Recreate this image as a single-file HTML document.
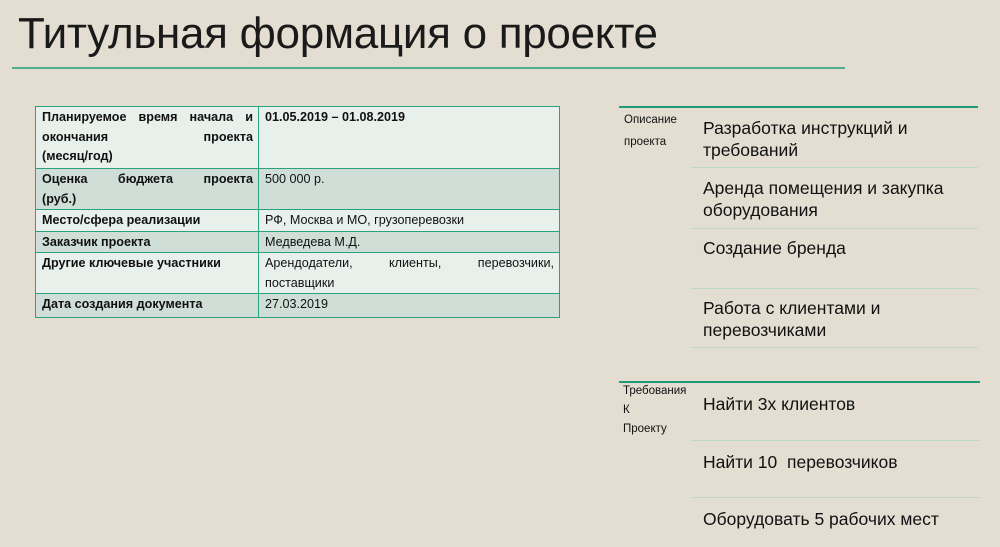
<!DOCTYPE html>
<html><head><meta charset="utf-8"><style>
body{margin:0;width:1000px;height:547px;background:#e4ded2;position:relative;overflow:hidden;font-family:"Liberation Sans",sans-serif;color:#111}
.a{position:absolute}
.t{left:18px;top:9px;font-size:44px;letter-spacing:-0.3px;white-space:nowrap;color:#1a1a1a}
table{position:absolute;left:35px;top:106px;width:525px;border-collapse:collapse;font-size:12.6px;line-height:19.5px;table-layout:fixed}
td{border:1.5px solid #2aa27f;padding:1px 5px 0 6px;vertical-align:top;text-align:justify;overflow:hidden}
td:first-child{width:211px;font-weight:bold}
tr.l td{background:#e8f0ec}
tr.d td{background:#cfdfd8}
.j{text-align:justify;text-align-last:justify;white-space:nowrap}
.r{left:703px;font-size:17.5px;line-height:22px;white-space:nowrap}
.s{font-size:11.5px;line-height:22px;left:624px}
.hl{height:2px;background:#1f9a78}
.sl{height:1px;background:#bcd8c8;left:691px;width:287px}
</style></head><body>
<div class="a t">Титульная формация о проекте</div>
<div class="a" style="left:12px;top:67px;width:833px;height:2px;background:#4fae8e"></div>
<table>
<tr class="l" style="height:62px"><td><div class="j" style="white-space:normal">Планируемое время начала и</div><div class="j" style="white-space:normal">окончания проекта</div><div>(месяц/год)</div></td><td style="font-weight:bold">01.05.2019 – 01.08.2019</td></tr>
<tr class="d" style="height:40px"><td><div class="j" style="white-space:normal">Оценка бюджета проекта</div><div>(руб.)</div></td><td>500 000 р.</td></tr>
<tr class="l" style="height:21px"><td>Место/сфера реализации</td><td>РФ, Москва и МО, грузоперевозки</td></tr>
<tr class="d" style="height:20px"><td>Заказчик проекта</td><td>Медведева М.Д.</td></tr>
<tr class="l" style="height:40px"><td>Другие ключевые участники</td><td>Арендодатели, клиенты, перевозчики, поставщики</td></tr>
<tr class="d" style="height:24px"><td>Дата создания документа</td><td>27.03.2019</td></tr>
</table>

<div class="a hl" style="left:619px;top:106px;width:359px"></div>
<div class="a s" style="top:109px">Описание<br>проекта</div>
<div class="a r" style="top:117px">Разработка инструкций и<br>требований</div>
<div class="a sl" style="top:167px"></div>
<div class="a r" style="top:177px">Аренда помещения и закупка<br>оборудования</div>
<div class="a sl" style="top:228px"></div>
<div class="a r" style="top:237px">Создание бренда</div>
<div class="a sl" style="top:288px"></div>
<div class="a r" style="top:297px">Работа с клиентами и<br>перевозчиками</div>
<div class="a sl" style="top:347px"></div>

<div class="a hl" style="left:619px;top:381px;width:361px"></div>
<div class="a s" style="top:382px;line-height:19px;left:623px">Требования<br>К<br>Проекту</div>
<div class="a r" style="top:393px">Найти 3х клиентов</div>
<div class="a sl" style="top:440px;width:289px"></div>
<div class="a r" style="top:451px">Найти 10&nbsp; перевозчиков</div>
<div class="a sl" style="top:497px;width:289px"></div>
<div class="a r" style="top:508px">Оборудовать 5 рабочих мест</div>
</body></html>
